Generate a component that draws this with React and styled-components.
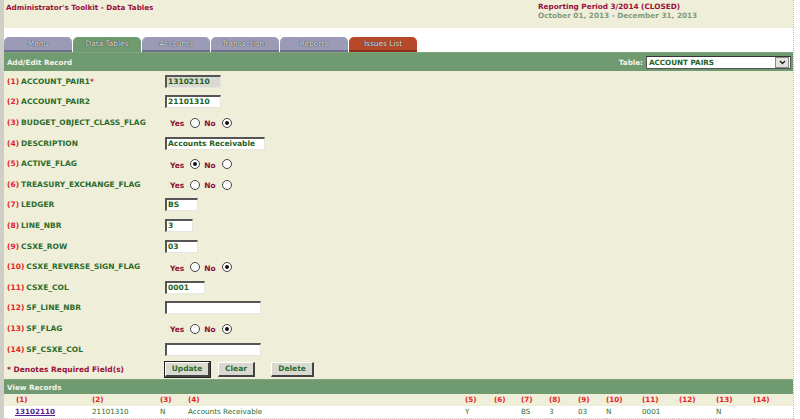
import React from 'react';
import styled, { createGlobalStyle } from 'styled-components';

const GlobalStyle = createGlobalStyle`
  html, body {
    margin: 0;
    padding: 0;
    background: #e9e9e3;
    font-family: "DejaVu Sans", Verdana, sans-serif;
  }
`;

const Page = styled.div`
  display: flex;
  width: 800px;
  height: 419px;
  overflow: hidden;
  background: #ffffff;
`;

const LeftStripe = styled.div`
  width: 4px;
  background: #cfcfc8;
`;

const Main = styled.div`
  width: 789px;
  display: flex;
  flex-direction: column;
`;

const RightStripe = styled.div`
  flex: 1;
  border-left: 1px dotted #b8b8b0;
  background: #ffffff;
`;

const Header = styled.div`
  height: 28px;
  background: #efeed9;
  display: flex;
  justify-content: space-between;
  padding: 0 0 0 2px;
  box-sizing: border-box;
`;

const Title = styled.div`
  color: #99103a;
  font-weight: bold;
  font-size: 7.2px;
  padding-top: 3px;
`;

const Period = styled.div`
  width: 255px;
  padding-top: 2px;
  font-weight: bold;
  font-size: 7.3px;
  line-height: 9px;
`;

const PeriodLine = styled.div`
  color: ${(p) => (p.$muted ? '#7f9c7f' : '#99103a')};
`;

const TabRow = styled.div`
  height: 24px;
  display: flex;
  align-items: flex-end;
  gap: 1px;
  background: #ffffff;
`;

const Tab = styled.div`
  width: 68px;
  height: 15px;
  box-sizing: border-box;
  border-radius: 5px 5px 0 0;
  background: ${(p) => p.$bg};
  border-bottom: 2px solid ${(p) => p.$edge};
  color: #e2e2e2;
  font-size: 7.4px;
  text-align: center;
  line-height: 14px;
  text-shadow: 0 0 1px #333, 0 0 1px #333;
`;

const Bar = styled.div`
  background: #709b71;
  height: ${(p) => p.$h}px;
  display: flex;
  align-items: center;
  justify-content: space-between;
  padding: 0 2px 0 3px;
  color: #f3f3ea;
  font-weight: bold;
  font-size: 7.2px;
  border-top: 1px dotted #8fb08f;
`;

const TableSelect = styled.div`
  display: flex;
  align-items: center;
  gap: 3px;
`;

const SelectBox = styled.div`
  width: 145px;
  height: 13px;
  box-sizing: border-box;
  background: #fff;
  border: 1px solid #555;
  border-top-color: #333;
  display: flex;
  align-items: center;
  justify-content: space-between;
  color: #1e5f1e;
  padding-left: 2px;
`;

const SelectArrow = styled.div`
  width: 12px;
  height: 9px;
  margin-right: 1px;
  background: #e4e4dc;
  border: 1px solid #888;
  display: flex;
  align-items: center;
  justify-content: center;
`;

const Form = styled.div`
  background: #efeed9;
  height: 308px;
  padding: 0 0 0 3px;
  box-sizing: border-box;
`;

const Row = styled.div`
  display: flex;
  align-items: center;
  height: 20.6px;
  font-size: 7.5px;
  font-weight: bold;
`;

const Label = styled.div`
  width: 158px;
  color: #2b6b2b;
`;

const Num = styled.span`
  color: #e6232b;
  margin-right: 2px;
`;

const Star = styled.span`
  color: #e6232b;
`;

const Input = styled.div`
  width: ${(p) => p.$w}px;
  height: 13px;
  box-sizing: border-box;
  background: ${(p) => (p.$ro ? '#d9d9d2' : '#ffffff')};
  border: 1px solid #e6e6e0;
  border-top: 2px solid #555;
  border-left: 2px solid #555;
  color: #1e5f1e;
  line-height: 10px;
  padding-left: 1px;
`;

const Radios = styled.div`
  display: flex;
  align-items: center;
  padding-left: 5px;
  padding-top: 3px;
  color: #8b1030;
`;

const Radio = styled.span`
  width: 10px;
  height: 10px;
  box-sizing: border-box;
  border-radius: 50%;
  border: 1px solid #444;
  background: #fff;
  margin: 0 4px 0 6px;
  position: relative;
  top: -1px;
  display: flex;
  align-items: center;
  justify-content: center;
  &::after {
    content: '';
    width: 4px;
    height: 4px;
    border-radius: 50%;
    background: ${(p) => (p.$on ? '#111' : 'transparent')};
  }
`;

const Required = styled.div`
  width: 158px;
  color: #99103a;
`;

const Buttons = styled.div`
  display: flex;
  gap: 8px;
`;

const Button = styled.div`
  width: ${(p) => p.$w}px;
  height: 15px;
  box-sizing: border-box;
  background: #d9d9d2;
  border: 1px solid #fff;
  border-right: 2px solid #444;
  border-bottom: 2px solid #444;
  outline: ${(p) => (p.$focus ? '1px solid #222' : 'none')};
  color: #2b6b2b;
  text-align: center;
  line-height: 12px;
  margin-right: ${(p) => p.$mr || 0}px;
`;

const Grid = styled.div`
  display: grid;
  grid-template-columns: 88px 68px 28px 277px 29px 27px 28px 29px 28px 36px 37px 37px 37px 1fr;
  font-size: 7.2px;
`;

const HeadCell = styled.div`
  background: #efeed9;
  height: 12px;
  line-height: 12px;
  color: #e6232b;
  font-weight: bold;
  padding-left: ${(p) => p.$pl || 0}px;
`;

const Cell = styled.div`
  background: #ffffff;
  height: 12px;
  line-height: 12px;
  color: #2b6b2b;
  padding-left: ${(p) => p.$pl || 0}px;
  border-bottom: 1px dotted #c8c8c0;
`;

const Link = styled.span`
  color: #5a1f8f;
  font-weight: bold;
  text-decoration: underline;
`;

const Footer = styled.div`
  flex: 1;
  background: #e9e9e3;
`;

const fields = [
  { label: 'ACCOUNT_PAIR1', req: true, input: '13102110', w: 56, ro: true },
  { label: 'ACCOUNT_PAIR2', input: '21101310', w: 56 },
  { label: 'BUDGET_OBJECT_CLASS_FLAG', radio: 'no' },
  { label: 'DESCRIPTION', input: 'Accounts Receivable', w: 100 },
  { label: 'ACTIVE_FLAG', radio: 'yes' },
  { label: 'TREASURY_EXCHANGE_FLAG', radio: 'none' },
  { label: 'LEDGER', input: 'BS', w: 33 },
  { label: 'LINE_NBR', input: '3', w: 28 },
  { label: 'CSXE_ROW', input: '03', w: 33 },
  { label: 'CSXE_REVERSE_SIGN_FLAG', radio: 'no' },
  { label: 'CSXE_COL', input: '0001', w: 40 },
  { label: 'SF_LINE_NBR', input: '', w: 96 },
  { label: 'SF_FLAG', radio: 'no' },
  { label: 'SF_CSXE_COL', input: '', w: 96 },
];

const tabs = [
  { name: 'Menu', bg: '#9b9bb8', edge: '#6f6f8f' },
  { name: 'Data Tables', bg: '#709b71', edge: '#709b71' },
  { name: 'Accounts', bg: '#9b9bb8', edge: '#6f6f8f' },
  { name: 'Transactions', bg: '#9b9bb8', edge: '#6f6f8f' },
  { name: 'Reports', bg: '#9b9bb8', edge: '#6f6f8f' },
  { name: 'Issues List', bg: '#b7492b', edge: '#8a3018' },
];

const record = ['13102110', '21101310', 'N', 'Accounts Receivable', 'Y', '', 'BS', '3', '03', 'N', '0001', '', 'N', ''];

function RadioPair({ value }) {
  return (
    <Radios>
      Yes <Radio $on={value === 'yes'} /> No <Radio $on={value === 'no'} />
    </Radios>
  );
}

export default function App() {
  return (
    <>
      <GlobalStyle />
      <Page>
        <LeftStripe />
        <Main>
          <Header>
            <Title>Administrator's Toolkit - Data Tables</Title>
            <Period>
              <PeriodLine>Reporting Period 3/2014 (CLOSED)</PeriodLine>
              <PeriodLine $muted>October 01, 2013 - December 31, 2013</PeriodLine>
            </Period>
          </Header>
          <TabRow>
            {tabs.map((t) => (
              <Tab key={t.name} $bg={t.bg} $edge={t.edge}>
                {t.name}
              </Tab>
            ))}
          </TabRow>
          <Bar $h={18}>
            <span>Add/Edit Record</span>
            <TableSelect>
              Table:
              <SelectBox>
                ACCOUNT PAIRS
                <SelectArrow>
                  <svg width="7" height="5" viewBox="0 0 7 5">
                    <path d="M1 1 L3.5 3.5 L6 1" stroke="#222" strokeWidth="1.4" fill="none" />
                  </svg>
                </SelectArrow>
              </SelectBox>
            </TableSelect>
          </Bar>
          <Form>
            {fields.map((f, i) => (
              <Row key={f.label}>
                <Label>
                  <Num>({i + 1})</Num>
                  {f.label}
                  {f.req && <Star>*</Star>}
                </Label>
                {f.radio ? (
                  <RadioPair value={f.radio} />
                ) : (
                  <Input $w={f.w} $ro={f.ro}>
                    {f.input}
                  </Input>
                )}
              </Row>
            ))}
            <Row>
              <Required>* Denotes Required Field(s)</Required>
              <Buttons>
                <Button $w={45} $focus>
                  Update
                </Button>
                <Button $w={37} $mr={8}>
                  Clear
                </Button>
                <Button $w={43}>Delete</Button>
              </Buttons>
            </Row>
          </Form>
          <Bar $h={14}>
            <span>View Records</span>
          </Bar>
          <Grid>
            {record.map((_, i) => (
              <HeadCell key={'h' + i} $pl={i === 0 ? 12 : 0}>
                ({i + 1})
              </HeadCell>
            ))}
            {record.map((v, i) => (
              <Cell key={'c' + i} $pl={i === 0 ? 11 : 0}>
                {i === 0 ? <Link>{v}</Link> : v}
              </Cell>
            ))}
          </Grid>
          <Footer />
        </Main>
        <RightStripe />
      </Page>
    </>
  );
}
